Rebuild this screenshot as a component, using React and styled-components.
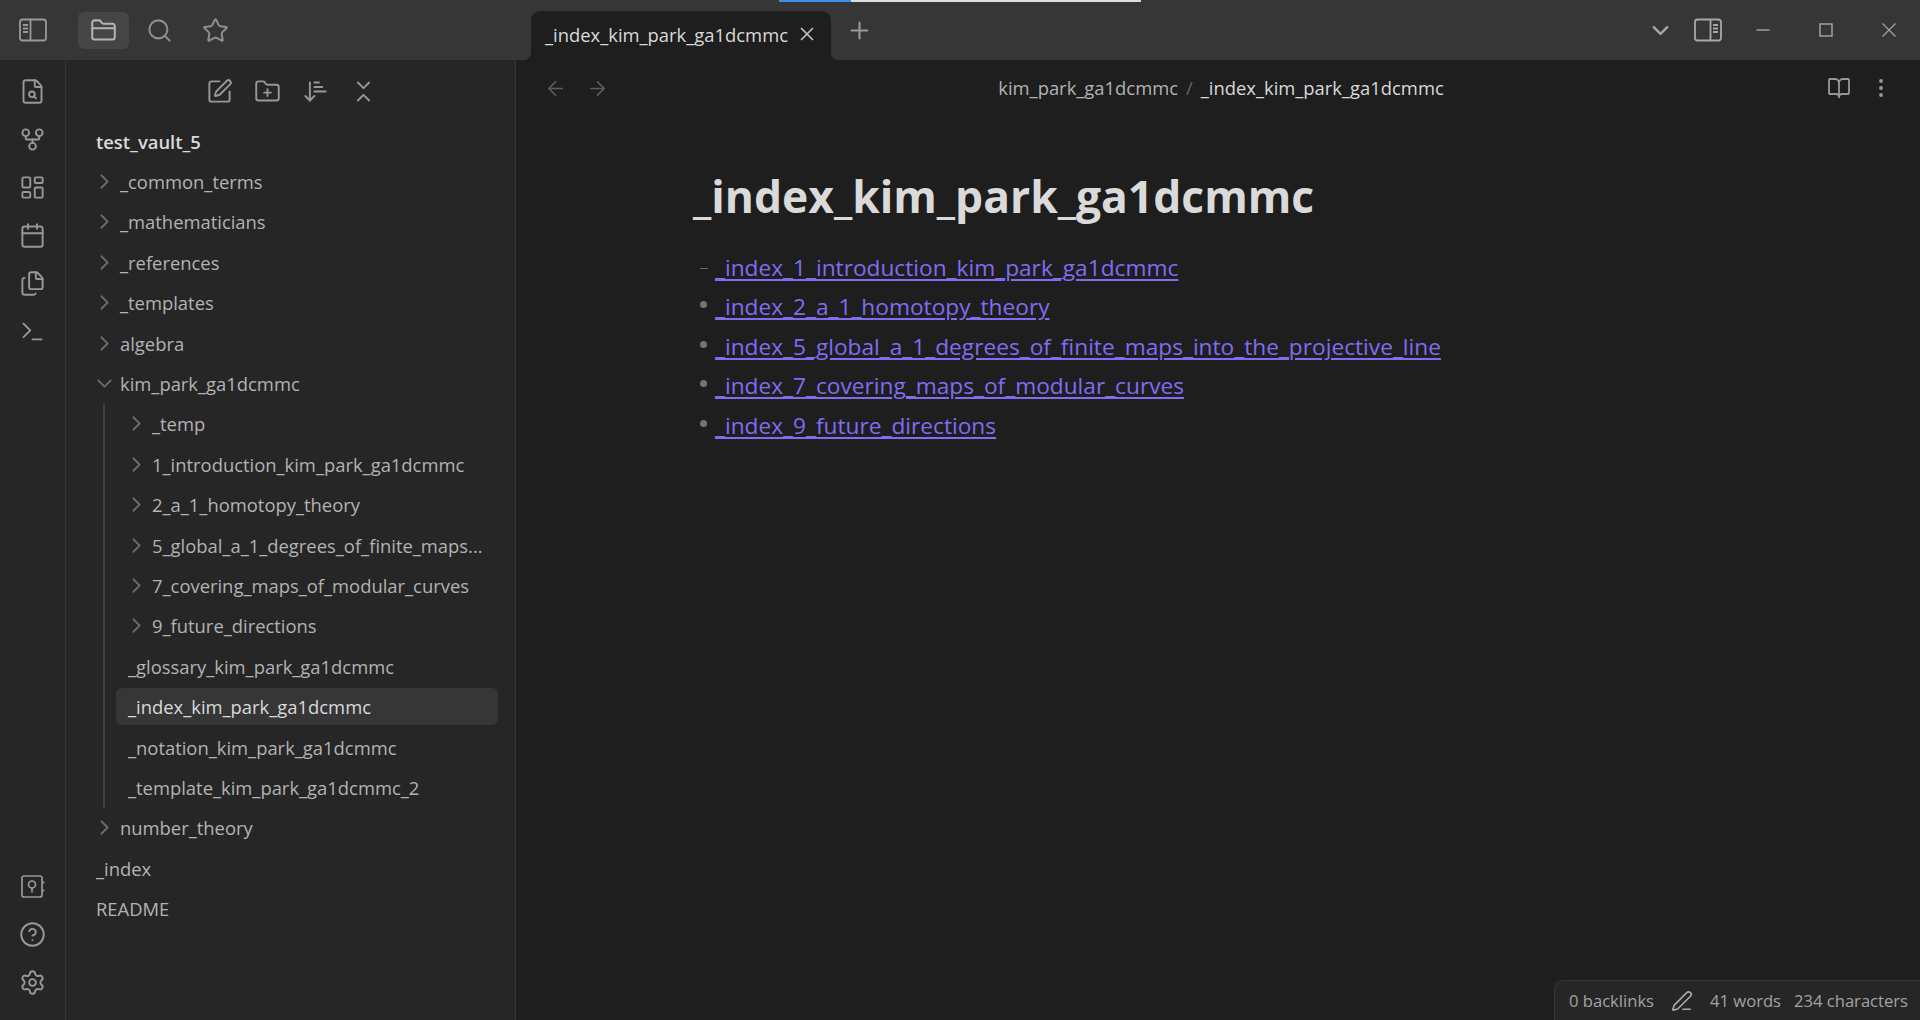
import React from "react";
import styled, { createGlobalStyle } from "styled-components";
import {
  ArrowDownNarrowWide,
  ArrowLeft,
  ArrowRight,
  BookOpen,
  Calendar,
  ChevronDown,
  ChevronRight,
  ChevronsDownUp,
  CircleHelp,
  EllipsisVertical,
  Files,
  FileSearch,
  FolderClosed,
  FolderPlus,
  GitFork,
  LayoutDashboard,
  PenLine,
  Plus,
  Search,
  Settings,
  SquarePen,
  Star,
  Terminal,
  X,
} from "lucide-react";

const FONT = `"Open Sans", "Noto Sans", sans-serif`;

const GlobalStyle = createGlobalStyle`
  html, body {
    margin: 0;
    height: 100%;
    background: #1e1e1e;
    overflow: hidden;
  }
  #root {
    height: 100%;
  }
`;

// ---- window frame
const Frame = styled.div`
  position: relative;
  height: 1020px;
  display: flex;
  flex-direction: column;
  font-family: ${FONT};
  color: #b3b3b3;
`;

const LoadBar = styled.div`
  position: absolute;
  top: 0;
  left: 779px;
  width: 362px;
  height: 2px;
  background: linear-gradient(to right, #3d8fe8 72px, #dcdcdc 72px);
`;

const TitleBar = styled.header`
  height: 60px;
  flex: none;
  display: flex;
  align-items: flex-end;
  background: #363636;
`;

const TitleLeft = styled.div`
  width: 531px;
  height: 60px;
  flex: none;
  display: flex;
  align-items: center;
`;

const ToggleSlot = styled.div`
  width: 66px;
  margin-right: 12px;
  display: flex;
  justify-content: center;
  color: #999;
`;

const TabIcons = styled.div`
  display: flex;
  gap: 5px;
`;

const TabIcon = styled.div`
  width: 51px;
  height: 37px;
  display: flex;
  align-items: center;
  justify-content: center;
  border-radius: 6px;
  color: ${(p) => (p.$active ? "#b3b3b3" : "#8f8f8f")};
  background: ${(p) => (p.$active ? "#454545" : "transparent")};
`;

const Tab = styled.div`
  position: relative;
  width: 300px;
  height: 49px;
  box-sizing: border-box;
  padding: 0 13px 3px 14px;
  display: flex;
  align-items: center;
  justify-content: space-between;
  background: #1e1e1e;
  border-radius: 9px 9px 0 0;
  color: #dadada;
  font-size: 18.4px;

  &::before,
  &::after {
    content: "";
    position: absolute;
    bottom: 0;
    width: 8px;
    height: 8px;
  }
  &::before {
    left: -8px;
    background: radial-gradient(circle at 0 0, transparent 8px, #1e1e1e 8.5px);
  }
  &::after {
    right: -8px;
    background: radial-gradient(circle at 100% 0, transparent 8px, #1e1e1e 8.5px);
  }
`;

const TabClose = styled.span`
  display: flex;
  margin-bottom: 1px;
  color: #c4c4c4;
`;

const NewTab = styled.div`
  align-self: center;
  margin-left: 15px;
  display: flex;
  color: #9a9a9a;
`;

const TitleRight = styled.div`
  margin-left: auto;
  height: 60px;
  display: flex;
  align-items: center;
`;

const ControlSlot = styled.div`
  width: ${(p) => p.$w}px;
  display: flex;
  justify-content: center;
  color: #a8a8a8;
`;

// ---- body
const Body = styled.div`
  flex: 1;
  min-height: 0;
  display: flex;
`;

const Ribbon = styled.nav`
  width: 65px;
  flex: none;
  box-sizing: content-box;
  border-right: 1px solid #363636;
  background: #262626;
  padding: 7px 0 14px;
  display: flex;
  flex-direction: column;
  justify-content: space-between;
`;

const RibbonGroup = styled.div`
  display: flex;
  flex-direction: column;
`;

const RibbonIcon = styled.div`
  height: 48px;
  display: flex;
  align-items: center;
  justify-content: center;
  color: #989898;
`;

const Sidebar = styled.aside`
  width: 449px;
  flex: none;
  border-right: 1px solid #363636;
  background: #262626;
  display: flex;
  flex-direction: column;
`;

const SidebarTools = styled.div`
  height: 61px;
  padding: 2px 0 0 1px;
  box-sizing: border-box;
  flex: none;
  display: flex;
  align-items: center;
  justify-content: center;
  color: #989898;
`;

const ToolIcon = styled.div`
  width: 48px;
  display: flex;
  justify-content: center;
`;

const Tree = styled.div`
  padding: 0 17px 0 20px;
  display: flex;
  flex-direction: column;
  font-size: 18.4px;
`;

const Row = styled.div`
  height: 40.4px;
  flex: none;
  display: flex;
  align-items: center;
`;

const RowLabel = styled.div`
  height: 37px;
  flex: 1;
  box-sizing: border-box;
  padding-left: ${(p) => (p.$nested ? "12px" : "10px")};
  display: flex;
  align-items: center;
  border-radius: 6px;
  white-space: nowrap;
  color: ${(p) => (p.$active || p.$root ? "#dadada" : "#b3b3b3")};
  font-weight: ${(p) => (p.$root ? 600 : 400)};
  background: ${(p) => (p.$active ? "#363636" : "transparent")};
`;

const Caret = styled.span`
  width: 16px;
  margin-right: 8px;
  display: flex;
  justify-content: center;
  color: #6c6c6c;

  svg {
    flex: none;
  }
`;

const Children = styled.div`
  margin-left: 17px;
  padding-left: 11px;
  border-left: 2px solid #3f3f3f;
  display: flex;
  flex-direction: column;
`;

// ---- main pane
const Main = styled.main`
  position: relative;
  flex: 1;
  min-width: 0;
  background: #1e1e1e;
`;

const ViewHeader = styled.div`
  height: 56px;
  padding: 0 18px;
  display: grid;
  grid-template-columns: 1fr auto 1fr;
  align-items: center;
`;

const HeaderGroup = styled.div`
  display: flex;
  justify-content: ${(p) => (p.$end ? "flex-end" : "flex-start")};
  color: ${(p) => (p.$end ? "#989898" : "#5c5c5c")};
`;

const HeaderIcon = styled.div`
  width: 42px;
  display: flex;
  justify-content: center;
`;

const Crumbs = styled.div`
  display: flex;
  align-items: center;
  gap: 8px;
  padding-bottom: 2px;
  font-size: 18.4px;
  margin-left: 6px;
`;

const CrumbSep = styled.span`
  color: #666;
`;

const CrumbCurrent = styled.span`
  color: #dadada;
`;

const Note = styled.article`
  padding: 0 0 0 177px;
`;

const Heading = styled.h1`
  margin: 0;
  padding-top: 56px;
  line-height: 48px;
  font-size: 44.4px;
  font-weight: 700;
  color: #dadada;
`;

const LinkList = styled.ul`
  list-style: none;
  margin: 27.5px 0 0;
  padding: 0 0 0 22px;
  font-size: 22.7px;
`;

const LinkItem = styled.li`
  position: relative;
  height: 39.6px;
  line-height: 39.6px;

  &::before {
    content: "";
    position: absolute;
    left: -15px;
    top: ${(p) => (p.$dash ? "20px" : "14px")};
    width: ${(p) => (p.$dash ? "8px" : "7px")};
    height: ${(p) => (p.$dash ? "1px" : "7px")};
    border-radius: ${(p) => (p.$dash ? "0" : "50%")};
    background: ${(p) => (p.$dash ? "#666" : "#747474")};
  }
`;

const NoteLink = styled.a`
  color: #7f6df2;
  text-decoration: underline;
  text-decoration-thickness: 1.5px;
  text-underline-offset: 3px;
`;

const StatusBar = styled.footer`
  position: absolute;
  right: 0;
  bottom: 0;
  height: 39px;
  box-sizing: content-box;
  padding: 0 12px 0 14px;
  display: flex;
  align-items: center;
  gap: 13px;
  background: #262626;
  border: 1px solid #363636;
  border-width: 1px 0 0 1px;
  border-radius: 9px 0 0 0;
  font-size: 16.6px;
  color: #a3a3a3;
`;

const StatusPen = styled.span`
  display: flex;
  margin: 0 4px;
  color: #a8a8a8;
`;

// ---- drawings that lucide has no match for
const PanelIcon = ({ flip }) => (
  <svg width="28" height="24" viewBox="0 0 28 24" fill="none" stroke="currentColor" strokeWidth="1.8">
    <g transform={flip ? "matrix(-1 0 0 1 28 0)" : undefined}>
      <rect x="1" y="1.5" width="26" height="21" rx="2.5" />
      <path d="M11.5 1.5v21M4 7h5M4 10.5h5M4 14h5" />
    </g>
  </svg>
);

const VaultIcon = () => (
  <svg width="25" height="25" viewBox="0 0 25 25" fill="none" stroke="currentColor" strokeWidth="1.7">
    <rect x="2" y="2" width="20" height="21" rx="2" />
    <circle cx="12" cy="10.5" r="3.5" />
    <path d="M12 14v4.5M23.5 7.5v2M23.5 15.5v2" />
  </svg>
);

const MinimizeIcon = () => (
  <svg width="14" height="14" viewBox="0 0 14 14" stroke="currentColor" strokeWidth="1.4">
    <path d="M0.5 7h13" />
  </svg>
);

const MaximizeIcon = () => (
  <svg width="14" height="14" viewBox="0 0 14 14" fill="none" stroke="currentColor" strokeWidth="1.4">
    <rect x="1" y="1" width="12" height="12" />
  </svg>
);

const CloseIcon = () => (
  <svg width="14" height="14" viewBox="0 0 14 14" stroke="currentColor" strokeWidth="1.1">
    <path d="M0.5 0.5l13 13M13.5 0.5l-13 13" />
  </svg>
);

const ribbonTop = [FileSearch, GitFork, LayoutDashboard, Calendar, Files, Terminal];
const sidebarTools = [SquarePen, FolderPlus, ArrowDownNarrowWide, ChevronsDownUp];

const topFolders = ["_common_terms", "_mathematicians", "_references", "_templates", "algebra"];
const subFolders = [
  "_temp",
  "1_introduction_kim_park_ga1dcmmc",
  "2_a_1_homotopy_theory",
  "5_global_a_1_degrees_of_finite_maps...",
  "7_covering_maps_of_modular_curves",
  "9_future_directions",
];
const subFiles = [
  "_glossary_kim_park_ga1dcmmc",
  "_index_kim_park_ga1dcmmc",
  "_notation_kim_park_ga1dcmmc",
  "_template_kim_park_ga1dcmmc_2",
];
const noteLinks = [
  "_index_1_introduction_kim_park_ga1dcmmc",
  "_index_2_a_1_homotopy_theory",
  "_index_5_global_a_1_degrees_of_finite_maps_into_the_projective_line",
  "_index_7_covering_maps_of_modular_curves",
  "_index_9_future_directions",
];

function FolderRow({ name, nested, open }) {
  const Chevron = open ? ChevronDown : ChevronRight;
  return (
    <Row>
      <RowLabel $nested={nested}>
        <Caret>
          <Chevron size={25} strokeWidth={1.7} />
        </Caret>
        {name}
      </RowLabel>
    </Row>
  );
}

export default function App() {
  return (
    <Frame>
      <GlobalStyle />
      <TitleBar>
        <TitleLeft>
          <ToggleSlot>
            <PanelIcon />
          </ToggleSlot>
          <TabIcons>
            <TabIcon $active>
              <FolderClosed size={27} strokeWidth={1.8} />
            </TabIcon>
            <TabIcon>
              <Search size={27} strokeWidth={1.8} />
            </TabIcon>
            <TabIcon>
              <Star size={27} strokeWidth={1.8} />
            </TabIcon>
          </TabIcons>
        </TitleLeft>
        <Tab>
          <span>_index_kim_park_ga1dcmmc</span>
          <TabClose>
            <X size={22} strokeWidth={1.8} />
          </TabClose>
        </Tab>
        <NewTab>
          <Plus size={27} strokeWidth={1.8} />
        </NewTab>
        <TitleRight>
          <ControlSlot $w={48}>
            <ChevronDown size={27} strokeWidth={2} />
          </ControlSlot>
          <ControlSlot $w={47}>
            <PanelIcon flip />
          </ControlSlot>
          <ControlSlot $w={63}>
            <MinimizeIcon />
          </ControlSlot>
          <ControlSlot $w={63}>
            <MaximizeIcon />
          </ControlSlot>
          <ControlSlot $w={63}>
            <CloseIcon />
          </ControlSlot>
        </TitleRight>
      </TitleBar>

      <Body>
        <Ribbon>
          <RibbonGroup>
            {ribbonTop.map((Icon, i) => (
              <RibbonIcon key={i}>
                <Icon size={27} strokeWidth={1.7} />
              </RibbonIcon>
            ))}
          </RibbonGroup>
          <RibbonGroup>
            <RibbonIcon>
              <VaultIcon />
            </RibbonIcon>
            <RibbonIcon>
              <CircleHelp size={27} strokeWidth={1.7} />
            </RibbonIcon>
            <RibbonIcon>
              <Settings size={27} strokeWidth={1.7} />
            </RibbonIcon>
          </RibbonGroup>
        </Ribbon>

        <Sidebar>
          <SidebarTools>
            {sidebarTools.map((Icon, i) => (
              <ToolIcon key={i}>
                <Icon size={27} strokeWidth={1.7} />
              </ToolIcon>
            ))}
          </SidebarTools>
          <Tree>
            <Row>
              <RowLabel $root>test_vault_5</RowLabel>
            </Row>
            {topFolders.map((name) => (
              <FolderRow key={name} name={name} />
            ))}
            <FolderRow name="kim_park_ga1dcmmc" open />
            <Children>
              {subFolders.map((name) => (
                <FolderRow key={name} name={name} nested />
              ))}
              {subFiles.map((name) => (
                <Row key={name}>
                  <RowLabel $nested $active={name === "_index_kim_park_ga1dcmmc"}>
                    {name}
                  </RowLabel>
                </Row>
              ))}
            </Children>
            <FolderRow name="number_theory" />
            <Row>
              <RowLabel>_index</RowLabel>
            </Row>
            <Row>
              <RowLabel>README</RowLabel>
            </Row>
          </Tree>
        </Sidebar>

        <Main>
          <ViewHeader>
            <HeaderGroup>
              <HeaderIcon>
                <ArrowLeft size={23} strokeWidth={1.8} />
              </HeaderIcon>
              <HeaderIcon>
                <ArrowRight size={23} strokeWidth={1.8} />
              </HeaderIcon>
            </HeaderGroup>
            <Crumbs>
              <span>kim_park_ga1dcmmc</span>
              <CrumbSep>/</CrumbSep>
              <CrumbCurrent>_index_kim_park_ga1dcmmc</CrumbCurrent>
            </Crumbs>
            <HeaderGroup $end>
              <HeaderIcon>
                <BookOpen size={24} strokeWidth={1.8} />
              </HeaderIcon>
              <HeaderIcon>
                <EllipsisVertical size={24} strokeWidth={1.8} />
              </HeaderIcon>
            </HeaderGroup>
          </ViewHeader>
          <Note>
            <Heading>_index_kim_park_ga1dcmmc</Heading>
            <LinkList>
              {noteLinks.map((link, i) => (
                <LinkItem key={link} $dash={i === 0}>
                  <NoteLink href="#">{link}</NoteLink>
                </LinkItem>
              ))}
            </LinkList>
          </Note>
          <StatusBar>
            <span>0 backlinks</span>
            <StatusPen>
              <PenLine size={22} strokeWidth={1.8} />
            </StatusPen>
            <span>41 words</span>
            <span>234 characters</span>
          </StatusBar>
        </Main>
      </Body>
      <LoadBar />
    </Frame>
  );
}
